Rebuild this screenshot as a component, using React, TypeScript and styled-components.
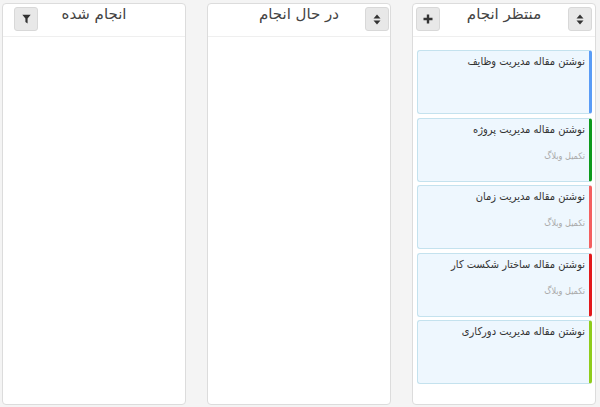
import React from "react";
import styled, { createGlobalStyle } from "styled-components";

const Global = createGlobalStyle`
  html, body { margin: 0; padding: 0; background: #f4f4f4; }
  body { font-family: "DejaVu Sans", "Noto Sans", sans-serif; color: #333; }
  * { box-sizing: border-box; }
`;

const Board = styled.div`
  direction: rtl;
  display: flex;
  gap: 21px;
  padding: 3px 4px 2px 2px;
  height: 407px;
`;

const Column = styled.section`
  width: 184px;
  height: 402px;
  background: #fff;
  border: 1px solid #dcdcdc;
  border-radius: 4px;
  display: flex;
  flex-direction: column;
  overflow: hidden;
`;

const Header = styled.div`
  display: grid;
  grid-template-columns: 1fr auto 1fr;
  align-items: start;
  height: 33px;
  border-bottom: 1px solid #efefef;
  flex-shrink: 0;
`;

const Title = styled.h3`
  margin: 0;
  grid-column: 2;
  font-size: 15px;
  font-weight: normal;
  line-height: 20px;
  padding-top: 0;
  color: #444;
  white-space: nowrap;
`;

const Slot = styled.div<{ $col: number; $inset: number }>`
  grid-column: ${(p) => p.$col};
  grid-row: 1;
  justify-self: ${(p) => (p.$col === 1 ? "start" : "end")};
  padding-top: 3px;
  ${(p) => (p.$col === 1 ? `margin-right: ${p.$inset}px;` : `margin-left: ${p.$inset}px;`)}
`;

const IconButton = styled.button`
  width: 24px;
  height: 24px;
  padding: 0;
  border: 1px solid #d8d8d8;
  border-radius: 3px;
  background: #e8e8e8;
  display: flex;
  align-items: center;
  justify-content: center;
  cursor: pointer;
`;

const List = styled.div`
  display: flex;
  flex-direction: column;
  gap: 3.5px;
  padding: 13px 3px 0 4px;
`;

const Card = styled.div<{ $accent: string }>`
  height: 64px;
  flex-shrink: 0;
  background: #eef7fe;
  border: 1px solid #c4e2ee;
  border-right: 3px solid ${(p) => p.$accent};
  border-radius: 3px;
  padding: 3px 4px 0 4px;
  font-family: "DejaVu Sans Condensed", "DejaVu Sans", sans-serif;
`;

const CardTitle = styled.div`
  font-size: 11px;
  line-height: 16px;
  color: #333;
`;

const CardSub = styled.div`
  margin-top: 11px;
  font-size: 9px;
  line-height: 14px;
  color: #a9a9a9;
`;

const SortIcon = () => (
  <svg width="8" height="11" viewBox="0 0 8 11">
    <path d="M4 0.5 L7.5 4.5 H0.5 Z M4 10.5 L7.5 6.5 H0.5 Z" fill="#333" />
  </svg>
);

const PlusIcon = () => (
  <svg width="10" height="10" viewBox="0 0 10 10">
    <path d="M3.8 0.5 H6.2 V3.8 H9.5 V6.2 H6.2 V9.5 H3.8 V6.2 H0.5 V3.8 H3.8 Z" fill="#333" />
  </svg>
);

const FilterIcon = () => (
  <svg width="9" height="10" viewBox="0 0 9 10">
    <path d="M0.3 0.8 H8.7 L5.6 4.6 V9.5 L3.4 8 V4.6 Z" fill="#333" />
  </svg>
);

type Task = { title: string; sub?: string; accent: string };

const tasks: Task[] = [
  { title: "نوشتن مقاله مدیریت وظایف", accent: "#5a9cf6" },
  { title: "نوشتن مقاله مدیریت پروژه", sub: "تکمیل وبلاگ", accent: "#0d9a1c" },
  { title: "نوشتن مقاله مدیریت زمان", sub: "تکمیل وبلاگ", accent: "#f46060" },
  { title: "نوشتن مقاله ساختار شکست کار", sub: "تکمیل وبلاگ", accent: "#e3191b" },
  { title: "نوشتن مقاله مدیریت دورکاری", accent: "#8fcc1c" },
];

export default function App() {
  return (
    <>
      <Global />
      <Board>
        <Column>
          <Header>
            <Slot $col={1} $inset={3}>
              <IconButton><SortIcon /></IconButton>
            </Slot>
            <Title>منتظر انجام</Title>
            <Slot $col={3} $inset={3}>
              <IconButton><PlusIcon /></IconButton>
            </Slot>
          </Header>
          <List>
            {tasks.map((t) => (
              <Card key={t.title} $accent={t.accent}>
                <CardTitle>{t.title}</CardTitle>
                {t.sub && <CardSub>{t.sub}</CardSub>}
              </Card>
            ))}
          </List>
        </Column>
        <Column>
          <Header>
            <Slot $col={1} $inset={1}>
              <IconButton><SortIcon /></IconButton>
            </Slot>
            <Title>در حال انجام</Title>
          </Header>
        </Column>
        <Column>
          <Header>
            <Title>انجام شده</Title>
            <Slot $col={3} $inset={11}>
              <IconButton><FilterIcon /></IconButton>
            </Slot>
          </Header>
        </Column>
      </Board>
    </>
  );
}
